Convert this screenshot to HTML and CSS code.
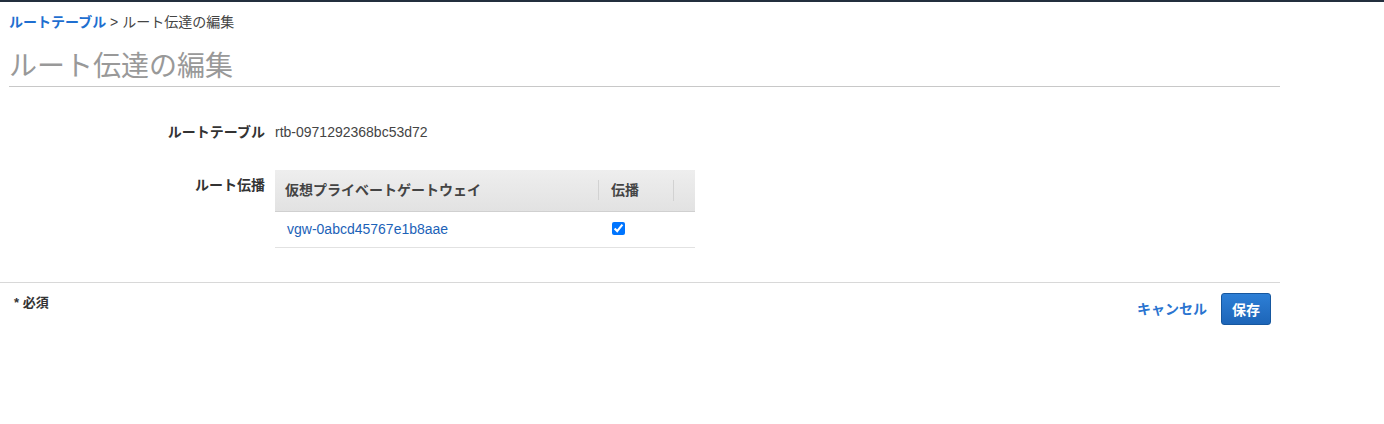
FILE: index.html
```html
<!DOCTYPE html>
<html lang="ja">
<head>
<meta charset="utf-8">
<link rel="stylesheet" href="styles.css">
</head>
<body>
<div class="topbar"></div>
<div class="page">
  <div class="crumbs"><a class="crumb-link">ルートテーブル</a> &gt; ルート伝達の編集</div>
  <h1 class="title">ルート伝達の編集</h1>
  <div class="form">
    <div class="row row-rt">
      <div class="label">ルートテーブル</div>
      <div class="value">rtb-0971292368bc53d72</div>
    </div>
    <div class="row row-prop">
      <div class="label label-prop">ルート伝播</div>
      <div class="value">
        <table class="grid">
          <thead>
            <tr>
              <th class="c1"><span>仮想プライベートゲートウェイ</span></th>
              <th class="c2"><span>伝播</span></th>
              <th class="c3"></th>
            </tr>
          </thead>
          <tbody>
            <tr>
              <td class="c1"><a class="vgw">vgw-0abcd45767e1b8aae</a></td>
              <td class="c2"><input type="checkbox" class="chk" checked></td>
              <td class="c3"></td>
            </tr>
          </tbody>
        </table>
      </div>
    </div>
  </div>
</div>
<div class="footer">
  <div class="req">* 必須</div>
  <div class="actions">
    <a class="cancel">キャンセル</a>
    <button class="save">保存</button>
  </div>
</div>
</body>
</html>
```

FILE: styles.css
```css
* { box-sizing: border-box; }
body {
  margin: 0;
  font-family: "Liberation Sans", Arial, "Noto Sans CJK JP", sans-serif;
  font-size: 14px;
  color: #444;
  background: #fff;
}
.topbar { height: 2px; background: #232f3e; }
.page { padding-left: 9px; width: 1280px; }
.crumbs {
  margin-top: 11px;
  line-height: 18px;
  height: 18px;
  color: #444;
}
.crumb-link { color: #1f6fd0; font-weight: bold; }
.title {
  margin: 18px 0 0;
  font-size: 28px;
  font-weight: normal;
  line-height: 36px;
  height: 38px;
  color: #999;
  border-bottom: 1px solid #c8c8c8;
  padding-top: 0;
}
.form { padding-top: 35px; }
.row { display: flex; gap: 10px; }
.label {
  width: 256px;
  text-align: right;
  font-weight: bold;
  color: #333;
  line-height: 20px;
}
.value { line-height: 20px; color: #444; }
.row-rt { height: 48px; }
.label-prop { padding-top: 5px; }
.grid {
  border-collapse: collapse;
  width: 420px;
}
.grid th {
  height: 41px;
  padding: 0;
  text-align: left;
  font-weight: bold;
  color: #444;
  background: linear-gradient(#eeeeee, #e2e2e2);
  border-bottom: 1px solid #d0d0d0;
}
.grid th span { display: block; padding-left: 10px; line-height: 20px; }
.grid th.c2 span { border-left: 1px solid #d2d2d2; padding-left: 12px; }
.grid th.c3 { position: relative; }
.grid th.c3::before {
  content: "";
  position: absolute;
  left: 0; top: 10px; bottom: 10px;
  border-left: 1px solid #d2d2d2;
}
.c1 { width: 323px; }
.c2 { width: 75px; }
.c3 { width: 22px; }
.grid td {
  height: 36px;
  padding: 0;
  border-bottom: 1px solid #e2e2e2;
}
.grid td.c1 { padding-left: 12px; padding-bottom: 1px; }
.grid td.c2 { padding-left: 14px; vertical-align: middle; }
.vgw { color: #1c62b8; }
.chk { margin: 0 0 4px 0; width: 13px; height: 13px; vertical-align: middle; }
.footer {
  width: 1280px;
  margin-top: 34px;
  border-top: 1px solid #d8d8d8;
  display: flex;
  justify-content: space-between;
  align-items: flex-start;
  padding-top: 10px;
}
.req {
  padding-left: 14px;
  font-weight: bold;
  font-size: 13px;
  color: #333;
  line-height: 20px;
}
.actions {
  display: flex;
  align-items: center;
  gap: 14px;
  padding-right: 9px;
}
.cancel { color: #2a74d0; font-weight: bold; font-size: 14px; line-height: 20px; }
.save {
  width: 50px;
  height: 32px;
  border: 1px solid #16579f;
  border-radius: 3px;
  background: linear-gradient(#2d7fd6, #1d65b8);
  color: #fff;
  font-family: "Liberation Sans", Arial, "Noto Sans CJK JP", sans-serif;
  font-weight: bold;
  font-size: 14px;
  padding: 0;
}
```
